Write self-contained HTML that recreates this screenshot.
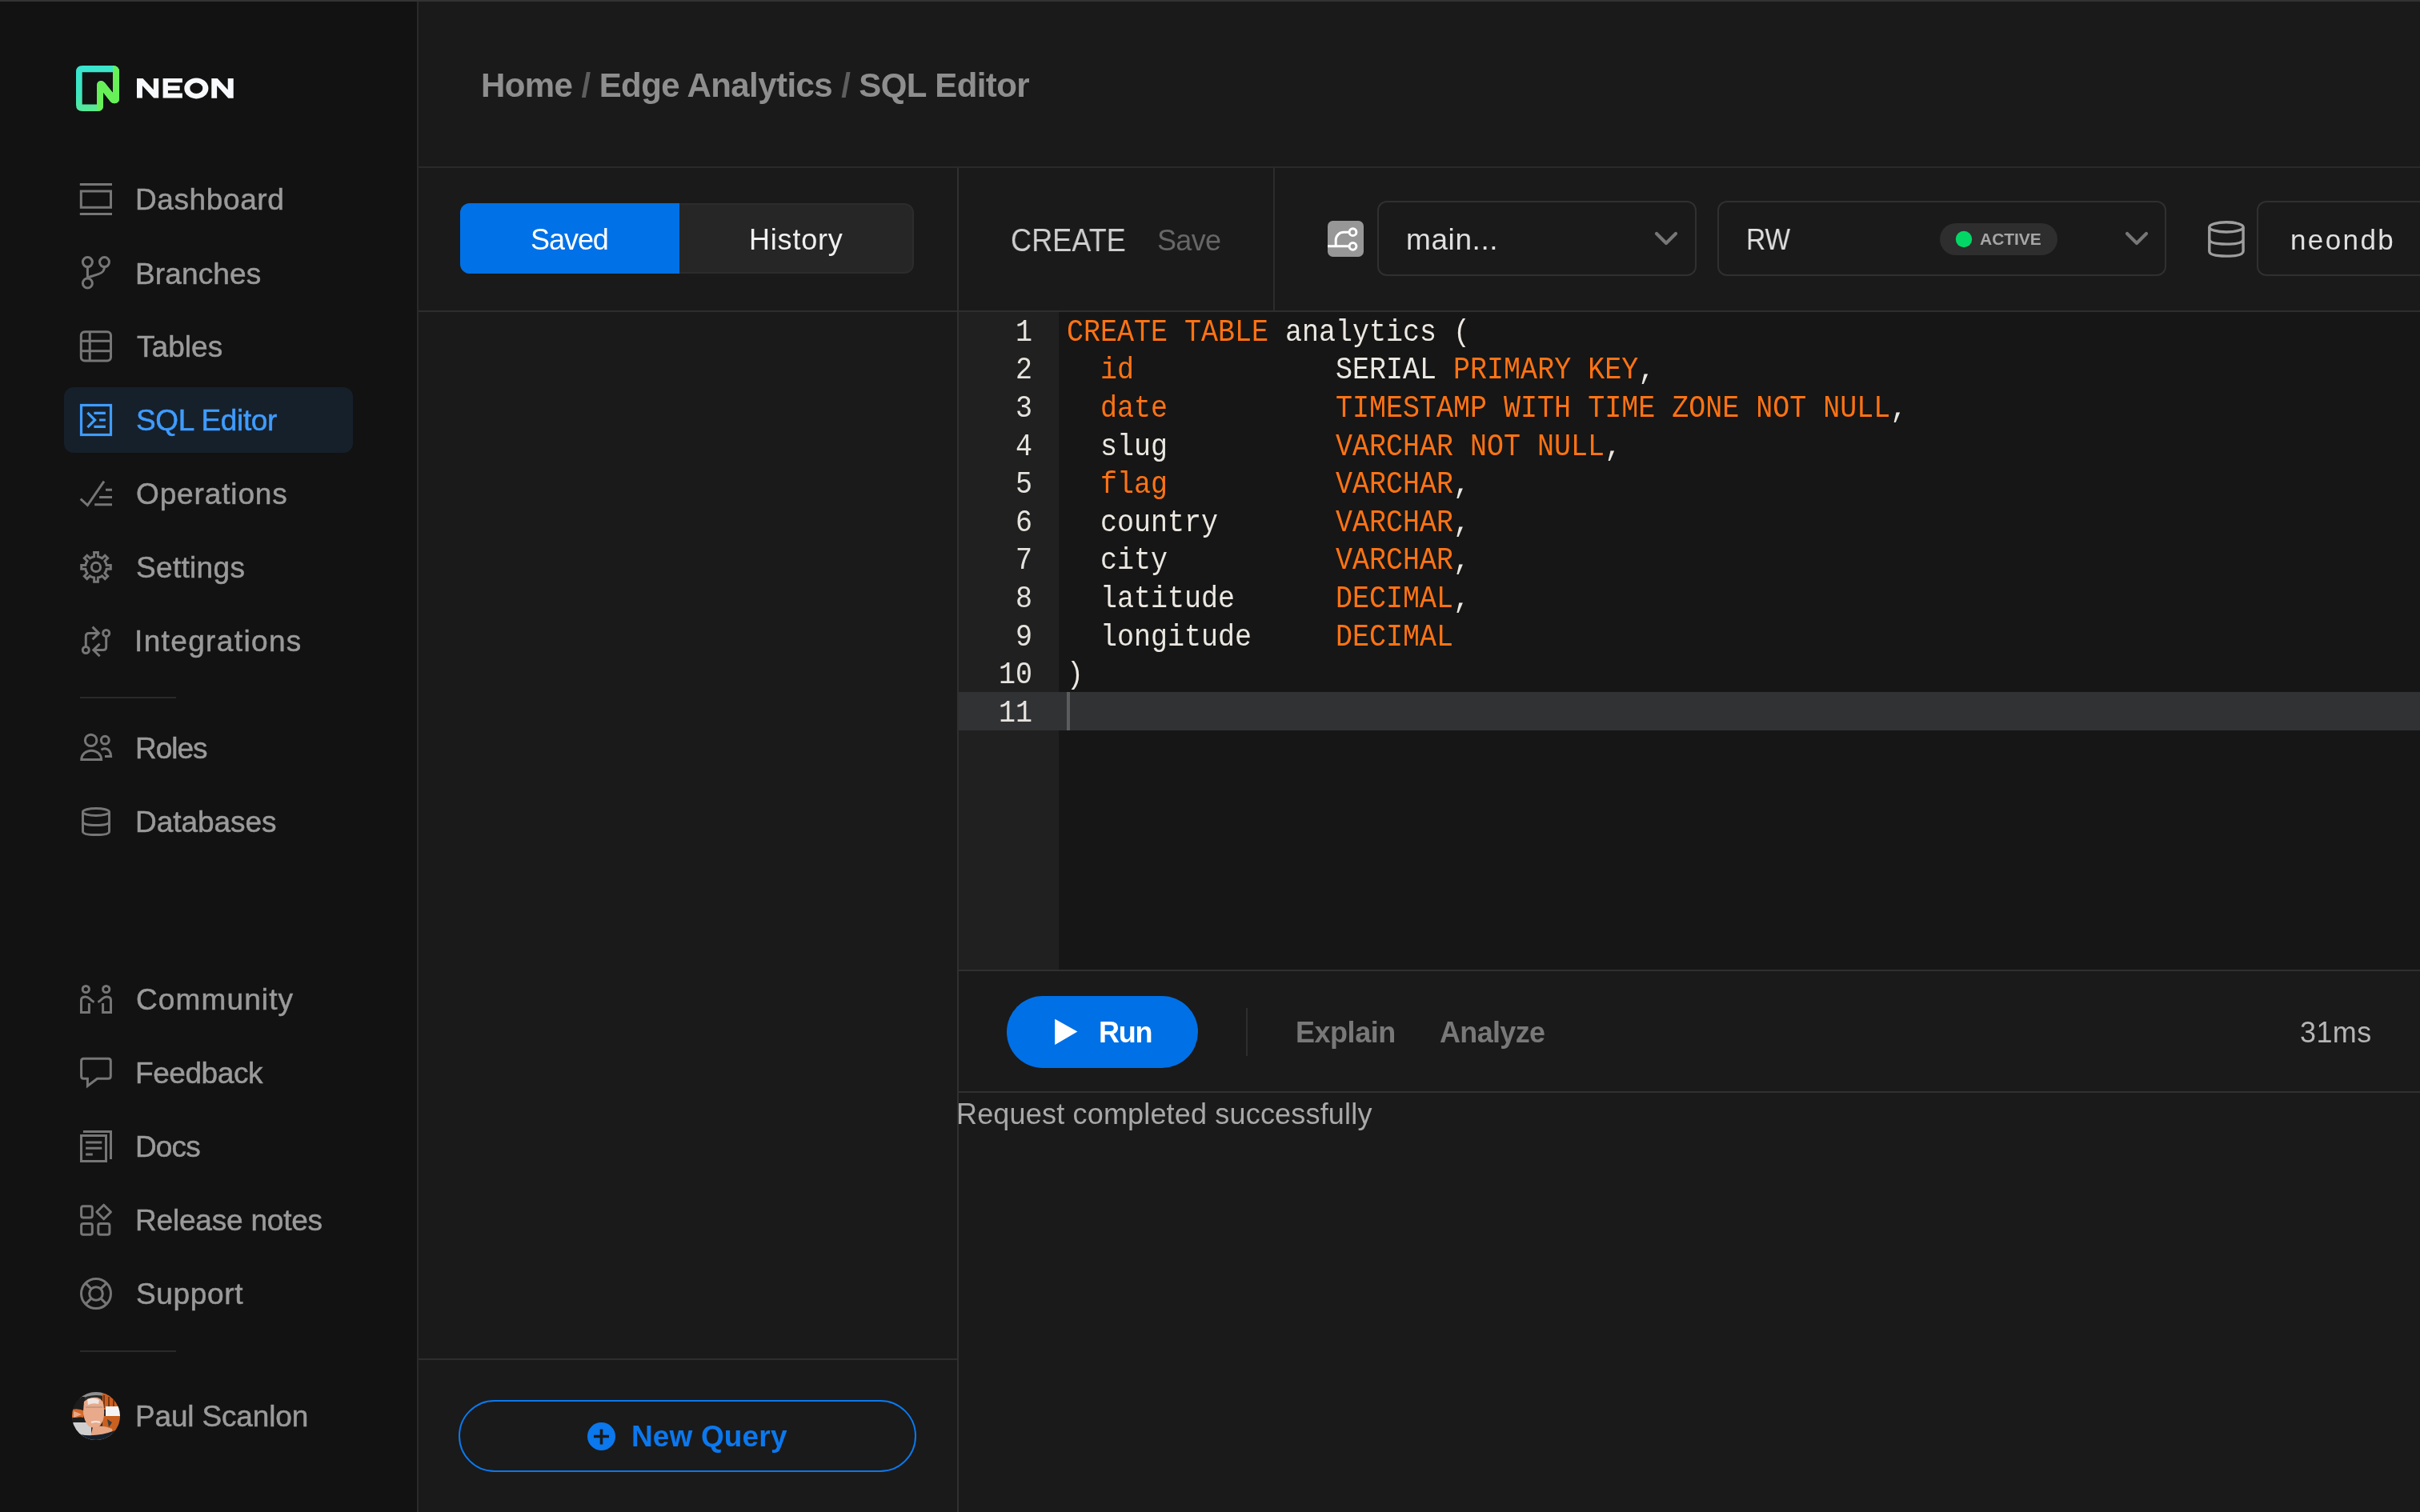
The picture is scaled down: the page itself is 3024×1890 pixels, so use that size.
<!DOCTYPE html><html><head><meta charset="utf-8"><style>
html,body{margin:0;padding:0;width:3024px;height:1890px;overflow:hidden;background:#1a1a1a}
.r,.t{position:absolute}
.t{white-space:pre;will-change:transform}
svg{display:block}
</style></head><body>
<div class="r" style="left:0px;top:0px;width:521px;height:1890px;background:#121212;"></div>
<div class="r" style="left:521px;top:0px;width:2px;height:1890px;background:#2a2a2a;"></div>
<div class="r" style="left:0px;top:0px;width:3024px;height:2px;background:#333333;"></div>
<svg class="r" style="left:90px;top:78px;" width="64" height="64" viewBox="0 0 64 64"><defs><linearGradient id="lg" x1="0" y1="0" x2="0.35" y2="1">
<stop offset="0" stop-color="#37e5d3"/><stop offset="0.55" stop-color="#3fe5c0"/><stop offset="1" stop-color="#5ae890"/></linearGradient></defs>
<path fill="url(#lg)" fill-rule="evenodd" d="M13 4H51Q59 4 59 12V45Q59 51 53 51.3Q50 51.3 48 49L39 37.5V54Q39 61 32 61H13Q5 61 5 53V12Q5 4 13 4ZM12.7 12.3V52.5H31.1V29Q31.1 23 36.5 23Q39 23 41 25.5L51 38V12.3Z"/>
<path fill="#68f058" d="M51 4Q59 4 59 12V45Q59 51 53 51.3Q50 51.3 48 49L39 37.5V54Q39 61 32 61H31.1V29Q31.1 23 36.5 23Q39 23 41 25.5L51 38Z"/></svg>
<svg class="r" style="left:160px;top:90px;" width="140" height="40" viewBox="160 90 140 40"><path fill="#f7f9fc" fill-rule="evenodd" d="M171 122.6V97.9H178.5L191.8 112.2V97.9H198.2V122.6H192.2L177.9 107V122.6Z M203.6 97.9H227.9V103.2H209.9V107.3H224.6V113H209.9V116.6H227.9V122.6H203.6Z M264.3 122.7V98.1H271.7L284.7 112.2V98.1H291.7V122.7H285.3L271.1 107V122.7Z"/><path fill="#f7f9fc" fill-rule="evenodd" d="M230.3 110.45A15.05 12.95 0 1 0 260.4 110.45A15.05 12.95 0 1 0 230.3 110.45ZM237.3 110.2A8 6.8 0 1 1 253.3 110.2A8 6.8 0 1 1 237.3 110.2Z"/></svg>
<div class="r" style="left:80px;top:484px;width:361px;height:82px;background:#16202b;border-radius:12px;"></div>
<svg class="r" style="left:90px;top:219px;" width="60" height="60" viewBox="0 0 60 60"><g fill="none" stroke="#767676" stroke-width="3"><path d="M9.8 11.45H50M9.8 48.45H50"/><rect x="11.3" y="20" width="37.2" height="20.3"/></g></svg>
<div id="nav_dash" class="t" style="left:169.2px;top:226px;font-family:'Liberation Sans', sans-serif;font-size:37px;line-height:48px;font-weight:normal;color:#9a9a9a;letter-spacing:0.6px;-webkit-text-stroke:0.5px #9a9a9a;">Dashboard</div>
<svg class="r" style="left:90px;top:310px;" width="60" height="60" viewBox="0 0 60 60"><g fill="none" stroke="#767676" stroke-width="3"><circle cx="19.4" cy="17.6" r="6"/><circle cx="40.5" cy="17.6" r="6"/><circle cx="19.4" cy="44" r="6"/><path d="M19.4 23.6V38M40.5 23.6C40.5 29 38 31 33 32.6L19.4 37"/></g></svg>
<div id="nav_branch" class="t" style="left:169.2px;top:319px;font-family:'Liberation Sans', sans-serif;font-size:37px;line-height:48px;font-weight:normal;color:#9a9a9a;letter-spacing:0.142px;-webkit-text-stroke:0.5px #9a9a9a;">Branches</div>
<svg class="r" style="left:90px;top:403px;" width="60" height="60" viewBox="0 0 60 60"><g fill="none" stroke="#767676" stroke-width="3"><rect x="11.3" y="11.8" width="37.2" height="36.2" rx="4.5"/><path d="M11.3 23.3H48.5M11.3 35.7H48.5M22.2 11.8V48"/></g></svg>
<div id="nav_tables" class="t" style="left:170.6px;top:410px;font-family:'Liberation Sans', sans-serif;font-size:37px;line-height:48px;font-weight:normal;color:#9a9a9a;letter-spacing:0.04px;-webkit-text-stroke:0.5px #9a9a9a;">Tables</div>
<svg class="r" style="left:90px;top:495px;" width="60" height="60" viewBox="0 0 60 60"><g fill="none" stroke="#3f9cff" stroke-width="3.2"><rect x="11.5" y="11.5" width="37" height="37"/><path d="M19.4 20.8L28.6 30L19.4 39.2M27.4 21.4H41.9M34.1 30H41.9M27.4 38.3H41.9"/></g></svg>
<div id="nav_sql" class="t" style="left:170.0px;top:502px;font-family:'Liberation Sans', sans-serif;font-size:37px;line-height:48px;font-weight:normal;color:#3f9cff;letter-spacing:-0.355px;-webkit-text-stroke:0.5px #3f9cff;">SQL Editor</div>
<svg class="r" style="left:90px;top:590px;" width="60" height="60" viewBox="0 0 60 60"><g fill="none" stroke="#767676" stroke-width="3"><path d="M10.7 33.7L19.4 41.5L40 11.7M42 22.3H50M34.1 31.5H50M28.2 40.7H50"/></g></svg>
<div id="nav_ops" class="t" style="left:170.0px;top:594px;font-family:'Liberation Sans', sans-serif;font-size:37px;line-height:48px;font-weight:normal;color:#9a9a9a;letter-spacing:0.865px;-webkit-text-stroke:0.5px #9a9a9a;">Operations</div>
<svg class="r" style="left:90px;top:680px;" width="60" height="60" viewBox="0 0 60 60"><g fill="none" stroke="#767676" stroke-width="3"><path d="M27.60 15.72L27.60 10.60L32.40 10.60L32.40 15.72A13.40 13.40 0 0 1 37.62 17.88L41.24 14.26L44.64 17.66L41.02 21.28A13.40 13.40 0 0 1 43.18 26.50L48.30 26.50L48.30 31.30L43.18 31.30A13.40 13.40 0 0 1 41.02 36.52L44.64 40.14L41.24 43.54L37.62 39.92A13.40 13.40 0 0 1 32.40 42.08L32.40 47.20L27.60 47.20L27.60 42.08A13.40 13.40 0 0 1 22.38 39.92L18.76 43.54L15.36 40.14L18.98 36.52A13.40 13.40 0 0 1 16.82 31.30L11.70 31.30L11.70 26.50L16.82 26.50A13.40 13.40 0 0 1 18.98 21.28L15.36 17.66L18.76 14.26L22.38 17.88A13.40 13.40 0 0 1 27.60 15.72Z"/><circle cx="30" cy="28.9" r="5.6"/></g></svg>
<div id="nav_settings" class="t" style="left:170.0px;top:686px;font-family:'Liberation Sans', sans-serif;font-size:37px;line-height:48px;font-weight:normal;color:#9a9a9a;letter-spacing:0.314px;-webkit-text-stroke:0.5px #9a9a9a;">Settings</div>
<svg class="r" style="left:90px;top:772px;" width="60" height="60" viewBox="0 0 60 60"><g fill="none" stroke="#767676" stroke-width="3"><circle cx="42.7" cy="19.4" r="4"/><circle cx="17.3" cy="40.5" r="4"/><path d="M17.3 36.5V23.4Q17.3 19.4 21.3 19.4H33.3M25.6 11.6L33.4 19.4L25.6 27.2M42.7 23.4V36.5Q42.7 40.5 38.7 40.5H26.7M34.6 32.7L26.8 40.5L34.6 48.3"/></g></svg>
<div id="nav_integ" class="t" style="left:168.0px;top:778px;font-family:'Liberation Sans', sans-serif;font-size:37px;line-height:48px;font-weight:normal;color:#9a9a9a;letter-spacing:1.364px;-webkit-text-stroke:0.5px #9a9a9a;">Integrations</div>
<svg class="r" style="left:90px;top:905px;" width="60" height="60" viewBox="0 0 60 60"><g fill="none" stroke="#767676" stroke-width="3"><circle cx="23.6" cy="20.4" r="7.2"/><circle cx="41.3" cy="20.2" r="4.9"/><path d="M11.8 44.4A12.4 11.2 0 0 1 36.6 44.4Z"/><path d="M36.5 32.2Q39 30.6 41.5 30.8Q48.2 31.3 48.6 40.5H41"/></g></svg>
<div id="nav_roles" class="t" style="left:169.2px;top:912px;font-family:'Liberation Sans', sans-serif;font-size:37px;line-height:48px;font-weight:normal;color:#9a9a9a;letter-spacing:-1.0px;-webkit-text-stroke:0.5px #9a9a9a;">Roles</div>
<svg class="r" style="left:90px;top:997px;" width="60" height="60" viewBox="0 0 60 60"><g fill="none" stroke="#767676" stroke-width="3"><ellipse cx="30" cy="17.9" rx="16.5" ry="4.5"/><path d="M13.5 17.9V42.2Q13.5 46.6 30 46.6Q46.5 46.6 46.5 42.2V17.9M13.5 30.1Q13.5 34.6 30 34.6Q46.5 34.6 46.5 30.1"/></g></svg>
<div id="nav_db" class="t" style="left:169.2px;top:1004px;font-family:'Liberation Sans', sans-serif;font-size:37px;line-height:48px;font-weight:normal;color:#9a9a9a;letter-spacing:-0.05px;-webkit-text-stroke:0.5px #9a9a9a;">Databases</div>
<svg class="r" style="left:90px;top:1219px;" width="60" height="60" viewBox="0 0 60 60"><g fill="none" stroke="#767676" stroke-width="3"><circle cx="17.3" cy="17.5" r="4.1"/><circle cx="42.7" cy="17.5" r="4.1"/><path d="M21.4 35V46.4H11.5V31Q11.5 27 16.5 26.9Q19.5 26.8 22 29.3Q25 32.5 27.6 33.6"/><path d="M38.6 35V46.4H48.5V31Q48.5 27 43.5 26.9Q40.5 26.8 38 29.3Q35 32.5 32.4 33.6"/></g></svg>
<div id="nav_community" class="t" style="left:170.2px;top:1226px;font-family:'Liberation Sans', sans-serif;font-size:37px;line-height:48px;font-weight:normal;color:#9a9a9a;letter-spacing:1.125px;-webkit-text-stroke:0.5px #9a9a9a;">Community</div>
<svg class="r" style="left:90px;top:1310px;" width="60" height="60" viewBox="0 0 60 60"><g fill="none" stroke="#767676" stroke-width="3" stroke-linejoin="miter"><path d="M14.6 13.2H45.3Q48.3 13.2 48.3 16.2V35.2Q48.3 38.2 45.3 38.2H31.5L19.4 47.5V38.2H14.6Q11.6 38.2 11.6 35.2V16.2Q11.6 13.2 14.6 13.2Z"/></g></svg>
<div id="nav_feedback" class="t" style="left:169.2px;top:1318px;font-family:'Liberation Sans', sans-serif;font-size:37px;line-height:48px;font-weight:normal;color:#9a9a9a;letter-spacing:-0.429px;-webkit-text-stroke:0.5px #9a9a9a;">Feedback</div>
<svg class="r" style="left:90px;top:1403px;" width="60" height="60" viewBox="0 0 60 60"><g fill="none" stroke="#767676" stroke-width="3"><rect x="11.5" y="16.5" width="31" height="32"/><path d="M13.9 11.4H48.5V46.1M17.1 25H37.3M17.1 32.3H37.3M17.1 39.9H25.8"/></g></svg>
<div id="nav_docs" class="t" style="left:169.2px;top:1410px;font-family:'Liberation Sans', sans-serif;font-size:37px;line-height:48px;font-weight:normal;color:#9a9a9a;letter-spacing:-0.865px;-webkit-text-stroke:0.5px #9a9a9a;">Docs</div>
<svg class="r" style="left:90px;top:1495px;" width="60" height="60" viewBox="0 0 60 60"><g fill="none" stroke="#767676" stroke-width="3"><rect x="11.6" y="12.8" width="13.7" height="14.3" rx="2.5"/><rect x="11.6" y="34.6" width="13.7" height="13.7" rx="2.5"/><rect x="32.8" y="34.6" width="14.1" height="13.7" rx="2.5"/><path d="M39.7 11.2L48.5 20L39.7 28.8L30.9 20Z" stroke-linejoin="round"/></g></svg>
<div id="nav_release" class="t" style="left:169.2px;top:1502px;font-family:'Liberation Sans', sans-serif;font-size:37px;line-height:48px;font-weight:normal;color:#9a9a9a;letter-spacing:-0.202px;-webkit-text-stroke:0.5px #9a9a9a;">Release notes</div>
<svg class="r" style="left:90px;top:1587px;" width="60" height="60" viewBox="0 0 60 60"><g fill="none" stroke="#767676" stroke-width="3"><circle cx="30" cy="30" r="18.5"/><circle cx="30" cy="30" r="8.3"/><path d="M35.87 35.87L43.08 43.08M24.13 35.87L16.92 43.08M24.13 24.13L16.92 16.92M35.87 24.13L43.08 16.92"/></g></svg>
<div id="nav_support" class="t" style="left:170.2px;top:1594px;font-family:'Liberation Sans', sans-serif;font-size:37px;line-height:48px;font-weight:normal;color:#9a9a9a;letter-spacing:0.667px;-webkit-text-stroke:0.5px #9a9a9a;">Support</div>
<div class="r" style="left:100px;top:871px;width:120px;height:2px;background:#2a2a2a;"></div>
<div class="r" style="left:100px;top:1688px;width:120px;height:2px;background:#2a2a2a;"></div>
<svg class="r" style="left:90px;top:1740px;" width="60" height="60" viewBox="0 0 60 60"><defs><clipPath id="av"><circle cx="30" cy="30" r="30"/></clipPath></defs>
<g clip-path="url(#av)">
<rect width="60" height="60" fill="#2a2a2a"/>
<path d="M8 0H48V8Q40 4 30 4Q18 4 10 10Z" fill="#8f8f8f"/>
<rect x="0" y="6" width="16" height="16" fill="#1c1c1c"/>
<path d="M0 22Q8 20 16 24L14 32Q8 30 0 34Z" fill="#d56a2a"/>
<path d="M2 24Q8 26 12 28L2 32Z" fill="#e8a98a"/>
<rect x="0" y="32" width="18" height="8" fill="#1e1e1e"/>
<path d="M0 38H24V60H0Z" fill="#cfcfcf"/>
<path d="M38 2H60V22H38Z" fill="#cf5f1e"/>
<path d="M40 4V20M46 6V20M52 8V20" stroke="#5a2a10" stroke-width="1.5"/>
<rect x="42" y="18" width="20" height="12" fill="#f4f4f4"/>
<path d="M38 30H60V52H38Z" fill="#c9601f"/>
<path d="M44 34L50 38L46 44Z" fill="#3a3a3a"/>
<path d="M15 12Q22 6 32 7Q40 9 40 22Q41 36 34 43Q26 47 20 42Q14 34 14 24Z" fill="#e8aa8a"/>
<path d="M19 9Q27 6 34 10L33 15Q26 13 20 16Z" fill="#eee6e2"/>
<path d="M17 19H38" stroke="#9a8a80" stroke-width="1.2"/>
<path d="M24 38Q30 36 35 38" stroke="#f2e8e4" stroke-width="2"/>
<path d="M26 44Q38 40 50 46L52 60H22Z" fill="#e6a684"/>
<path d="M10 53Q30 57 54 48L56 62H8Z" fill="#15202c"/>
</g></svg>
<div id="paul" class="t" style="left:169.0px;top:1747px;font-family:'Liberation Sans', sans-serif;font-size:37px;line-height:48px;font-weight:normal;color:#9a9a9a;letter-spacing:-0.165px;-webkit-text-stroke:0.5px #9a9a9a;">Paul Scanlon</div>
<div id="crumb" class="t" style="left:601.0px;top:79px;font-family:'Liberation Sans', sans-serif;font-size:42px;line-height:55px;font-weight:bold;color:#8e8e8e;letter-spacing:-0.582px;">Home <span style="color:#5e5e5e">/</span> Edge Analytics <span style="color:#5e5e5e">/</span> SQL Editor</div>
<div class="r" style="left:523px;top:208px;width:2501px;height:2px;background:#2a2a2a;"></div>
<div class="r" style="left:523px;top:388px;width:2501px;height:2px;background:#2e2e2e;"></div>
<div class="r" style="left:1196px;top:210px;width:2px;height:1680px;background:#303030;"></div>
<div class="r" style="left:575px;top:254px;width:567px;height:88px;background:#262626;border-radius:12px;box-sizing:border-box;border:2px solid #2c2c2c;"></div>
<div class="r" style="left:575px;top:254px;width:274px;height:88px;background:#0071e6;border-radius:12px 0 0 12px;"></div>
<div id="saved" class="t" style="left:663.4px;top:276px;font-family:'Liberation Sans', sans-serif;font-size:36px;line-height:47px;font-weight:normal;color:#ffffff;letter-spacing:-1.05px;">Saved</div>
<div id="history" class="t" style="left:935.6px;top:276px;font-family:'Liberation Sans', sans-serif;font-size:36px;line-height:47px;font-weight:normal;color:#f0f0f0;letter-spacing:0.801px;">History</div>
<div class="r" style="left:523px;top:1698px;width:673px;height:2px;background:#2e2e2e;"></div>
<div class="r" style="left:573px;top:1750px;width:572px;height:90px;background:transparent;box-sizing:border-box;border:2.5px solid #0b78ee;border-radius:45px;"></div>
<svg class="r" style="left:733px;top:1777px;" width="38" height="38" viewBox="0 0 38 38"><circle cx="18.5" cy="18.5" r="17.5" fill="#0b78ee"/><path d="M18.5 9.5V28.5M9 18.5H28" stroke="#1a1a1a" stroke-width="3.6"/></svg>
<div id="newq" class="t" style="left:789.2px;top:1772px;font-family:'Liberation Sans', sans-serif;font-size:37px;line-height:48px;font-weight:bold;color:#0b78ee;letter-spacing:0.147px;">New Query</div>
<div id="create" class="t" style="left:1262.5px;top:274px;font-family:'Liberation Sans', sans-serif;font-size:40px;line-height:52px;font-weight:normal;color:#cfcfcf;letter-spacing:0px;transform:scaleX(0.9027);transform-origin:0 0;">CREATE</div>
<div id="save" class="t" style="left:1446.0px;top:277px;font-family:'Liberation Sans', sans-serif;font-size:36px;line-height:47px;font-weight:normal;color:#666666;letter-spacing:-0.667px;">Save</div>
<div class="r" style="left:1591px;top:210px;width:2px;height:178px;background:#2c2c2c;"></div>
<svg class="r" style="left:1659px;top:276px;" width="45" height="45" viewBox="0 0 45 45"><rect x="0" y="0" width="45" height="45" rx="6.5" fill="#979797"/><g fill="none" stroke="#fff" stroke-width="3"><path d="M0 31.8H27M10.2 31.8V24A10 10 0 0 1 20.2 14.2H27"/><circle cx="31.5" cy="14.2" r="4.4"/><circle cx="31.5" cy="31.8" r="4.4"/></g></svg>
<div class="r" style="left:1721px;top:251px;width:399px;height:94px;background:transparent;box-sizing:border-box;border:2px solid #303030;border-radius:12px;"></div>
<div id="main" class="t" style="left:1757.4px;top:276px;font-family:'Liberation Sans', sans-serif;font-size:37px;line-height:48px;font-weight:normal;color:#e0e0e0;letter-spacing:0.599px;">main...</div>
<svg class="r" style="left:2067px;top:289px;" width="30" height="19" viewBox="0 0 30 19"><path d="M3 3L15 15L27 3" fill="none" stroke="#777" stroke-width="4.2" stroke-linecap="round" stroke-linejoin="round"/></svg>
<div class="r" style="left:2146px;top:251px;width:561px;height:94px;background:transparent;box-sizing:border-box;border:2px solid #303030;border-radius:12px;"></div>
<div id="rw" class="t" style="left:2181.8px;top:276px;font-family:'Liberation Sans', sans-serif;font-size:37px;line-height:48px;font-weight:normal;color:#e0e0e0;letter-spacing:0px;transform:scaleX(0.9034);transform-origin:0 0;">RW</div>
<div class="r" style="left:2424px;top:279px;width:147px;height:40px;background:#2e2e2e;border-radius:20px;"></div>
<svg class="r" style="left:2443px;top:288px;" width="22" height="22" viewBox="0 0 22 22"><circle cx="11" cy="11" r="10.2" fill="#03d866"/></svg>
<div id="active" class="t" style="left:2474.4px;top:285px;font-family:'Liberation Sans', sans-serif;font-size:21px;line-height:27px;font-weight:bold;color:#a6a6a6;letter-spacing:-0.04px;">ACTIVE</div>
<svg class="r" style="left:2655px;top:289px;" width="30" height="19" viewBox="0 0 30 19"><path d="M3 3L15 15L27 3" fill="none" stroke="#777" stroke-width="4.2" stroke-linecap="round" stroke-linejoin="round"/></svg>
<svg class="r" style="left:2750px;top:268px;" width="64" height="64" viewBox="0 0 64 64"><g fill="none" stroke="#9e9e9e" stroke-width="3.4"><ellipse cx="31.95" cy="15.9" rx="21.15" ry="6.1"/><path d="M10.8 15.9V46Q10.8 52.1 31.95 52.1Q53.1 52.1 53.1 46V15.9M10.8 31Q10.8 37.1 31.95 37.1Q53.1 37.1 53.1 31"/></g></svg>
<div class="r" style="left:2820px;top:251px;width:260px;height:94px;background:transparent;box-sizing:border-box;border:2px solid #303030;border-radius:12px;"></div>
<div id="neondb" class="t" style="left:2862.0px;top:277px;font-family:'Liberation Sans', sans-serif;font-size:35px;line-height:46px;font-weight:normal;color:#e0e0e0;letter-spacing:2.4px;">neondb</div>
<div class="r" style="left:1198px;top:390px;width:1826px;height:822px;background:#161616;"></div>
<div class="r" style="left:1198px;top:390px;width:125px;height:822px;background:#202020;"></div>
<div class="r" style="left:1198px;top:865px;width:1826px;height:48px;background:#313234;"></div>
<div class="r" style="left:1333px;top:865px;width:4px;height:48px;background:#5c5c5c;"></div>
<div id="code0" class="t" style="left:1333px;top:395px;font-family:'Liberation Mono', monospace;font-size:35px;line-height:46px;font-weight:normal;color:#ebe7e1;letter-spacing:0px;transform:scaleY(1.12);transform-origin:0 80%;"><span style="color:#ff7314">CREATE TABLE</span><span style="color:#ebe7e1"> analytics (</span></div>
<div id="ln0" class="t" style="left:1269px;top:395px;font-family:'Liberation Mono', monospace;font-size:35px;line-height:46px;font-weight:normal;color:#e6e3de;letter-spacing:0px;transform:scaleY(1.12);transform-origin:0 80%;">1</div>
<div id="code1" class="t" style="left:1333px;top:442px;font-family:'Liberation Mono', monospace;font-size:35px;line-height:46px;font-weight:normal;color:#ebe7e1;letter-spacing:0px;transform:scaleY(1.12);transform-origin:0 80%;"><span style="color:#ebe7e1">  </span><span style="color:#ff7314">id</span><span style="color:#ebe7e1">            SERIAL </span><span style="color:#ff7314">PRIMARY KEY</span><span style="color:#ebe7e1">,</span></div>
<div id="ln1" class="t" style="left:1269px;top:442px;font-family:'Liberation Mono', monospace;font-size:35px;line-height:46px;font-weight:normal;color:#e6e3de;letter-spacing:0px;transform:scaleY(1.12);transform-origin:0 80%;">2</div>
<div id="code2" class="t" style="left:1333px;top:490px;font-family:'Liberation Mono', monospace;font-size:35px;line-height:46px;font-weight:normal;color:#ebe7e1;letter-spacing:0px;transform:scaleY(1.12);transform-origin:0 80%;"><span style="color:#ebe7e1">  </span><span style="color:#ff7314">date</span><span style="color:#ebe7e1">          </span><span style="color:#ff7314">TIMESTAMP WITH TIME ZONE NOT NULL</span><span style="color:#ebe7e1">,</span></div>
<div id="ln2" class="t" style="left:1269px;top:490px;font-family:'Liberation Mono', monospace;font-size:35px;line-height:46px;font-weight:normal;color:#e6e3de;letter-spacing:0px;transform:scaleY(1.12);transform-origin:0 80%;">3</div>
<div id="code3" class="t" style="left:1333px;top:538px;font-family:'Liberation Mono', monospace;font-size:35px;line-height:46px;font-weight:normal;color:#ebe7e1;letter-spacing:0px;transform:scaleY(1.12);transform-origin:0 80%;"><span style="color:#ebe7e1">  slug          </span><span style="color:#ff7314">VARCHAR NOT NULL</span><span style="color:#ebe7e1">,</span></div>
<div id="ln3" class="t" style="left:1269px;top:538px;font-family:'Liberation Mono', monospace;font-size:35px;line-height:46px;font-weight:normal;color:#e6e3de;letter-spacing:0px;transform:scaleY(1.12);transform-origin:0 80%;">4</div>
<div id="code4" class="t" style="left:1333px;top:585px;font-family:'Liberation Mono', monospace;font-size:35px;line-height:46px;font-weight:normal;color:#ebe7e1;letter-spacing:0px;transform:scaleY(1.12);transform-origin:0 80%;"><span style="color:#ebe7e1">  </span><span style="color:#ff7314">flag</span><span style="color:#ebe7e1">          </span><span style="color:#ff7314">VARCHAR</span><span style="color:#ebe7e1">,</span></div>
<div id="ln4" class="t" style="left:1269px;top:585px;font-family:'Liberation Mono', monospace;font-size:35px;line-height:46px;font-weight:normal;color:#e6e3de;letter-spacing:0px;transform:scaleY(1.12);transform-origin:0 80%;">5</div>
<div id="code5" class="t" style="left:1333px;top:633px;font-family:'Liberation Mono', monospace;font-size:35px;line-height:46px;font-weight:normal;color:#ebe7e1;letter-spacing:0px;transform:scaleY(1.12);transform-origin:0 80%;"><span style="color:#ebe7e1">  country       </span><span style="color:#ff7314">VARCHAR</span><span style="color:#ebe7e1">,</span></div>
<div id="ln5" class="t" style="left:1269px;top:633px;font-family:'Liberation Mono', monospace;font-size:35px;line-height:46px;font-weight:normal;color:#e6e3de;letter-spacing:0px;transform:scaleY(1.12);transform-origin:0 80%;">6</div>
<div id="code6" class="t" style="left:1333px;top:680px;font-family:'Liberation Mono', monospace;font-size:35px;line-height:46px;font-weight:normal;color:#ebe7e1;letter-spacing:0px;transform:scaleY(1.12);transform-origin:0 80%;"><span style="color:#ebe7e1">  city          </span><span style="color:#ff7314">VARCHAR</span><span style="color:#ebe7e1">,</span></div>
<div id="ln6" class="t" style="left:1269px;top:680px;font-family:'Liberation Mono', monospace;font-size:35px;line-height:46px;font-weight:normal;color:#e6e3de;letter-spacing:0px;transform:scaleY(1.12);transform-origin:0 80%;">7</div>
<div id="code7" class="t" style="left:1333px;top:728px;font-family:'Liberation Mono', monospace;font-size:35px;line-height:46px;font-weight:normal;color:#ebe7e1;letter-spacing:0px;transform:scaleY(1.12);transform-origin:0 80%;"><span style="color:#ebe7e1">  latitude      </span><span style="color:#ff7314">DECIMAL</span><span style="color:#ebe7e1">,</span></div>
<div id="ln7" class="t" style="left:1269px;top:728px;font-family:'Liberation Mono', monospace;font-size:35px;line-height:46px;font-weight:normal;color:#e6e3de;letter-spacing:0px;transform:scaleY(1.12);transform-origin:0 80%;">8</div>
<div id="code8" class="t" style="left:1333px;top:776px;font-family:'Liberation Mono', monospace;font-size:35px;line-height:46px;font-weight:normal;color:#ebe7e1;letter-spacing:0px;transform:scaleY(1.12);transform-origin:0 80%;"><span style="color:#ebe7e1">  longitude     </span><span style="color:#ff7314">DECIMAL</span></div>
<div id="ln8" class="t" style="left:1269px;top:776px;font-family:'Liberation Mono', monospace;font-size:35px;line-height:46px;font-weight:normal;color:#e6e3de;letter-spacing:0px;transform:scaleY(1.12);transform-origin:0 80%;">9</div>
<div id="code9" class="t" style="left:1333px;top:823px;font-family:'Liberation Mono', monospace;font-size:35px;line-height:46px;font-weight:normal;color:#ebe7e1;letter-spacing:0px;transform:scaleY(1.12);transform-origin:0 80%;"><span style="color:#ebe7e1">)</span></div>
<div id="ln9" class="t" style="left:1248px;top:823px;font-family:'Liberation Mono', monospace;font-size:35px;line-height:46px;font-weight:normal;color:#e6e3de;letter-spacing:0px;transform:scaleY(1.12);transform-origin:0 80%;">10</div>
<div id="code10" class="t" style="left:1333px;top:871px;font-family:'Liberation Mono', monospace;font-size:35px;line-height:46px;font-weight:normal;color:#ebe7e1;letter-spacing:0px;transform:scaleY(1.12);transform-origin:0 80%;"><span style="color:#ebe7e1"></span></div>
<div id="ln10" class="t" style="left:1248px;top:871px;font-family:'Liberation Mono', monospace;font-size:35px;line-height:46px;font-weight:normal;color:#e6e3de;letter-spacing:0px;transform:scaleY(1.12);transform-origin:0 80%;">11</div>
<div class="r" style="left:1198px;top:1212px;width:1826px;height:2px;background:#303030;"></div>
<div class="r" style="left:1258px;top:1245px;width:239px;height:90px;background:#0070e6;border-radius:45px;"></div>
<svg class="r" style="left:1318px;top:1273px;" width="30" height="34" viewBox="0 0 30 34"><path d="M0.2 0.8V33L28.4 16.6Z" fill="#fff"/></svg>
<div id="run" class="t" style="left:1373.0px;top:1267px;font-family:'Liberation Sans', sans-serif;font-size:36px;line-height:47px;font-weight:bold;color:#ffffff;letter-spacing:-1.2px;">Run</div>
<div class="r" style="left:1557px;top:1260px;width:2px;height:60px;background:#2e2e2e;"></div>
<div id="explain" class="t" style="left:1619.0px;top:1267px;font-family:'Liberation Sans', sans-serif;font-size:36px;line-height:47px;font-weight:bold;color:#787878;letter-spacing:-0.467px;">Explain</div>
<div id="analyze" class="t" style="left:1799.0px;top:1267px;font-family:'Liberation Sans', sans-serif;font-size:36px;line-height:47px;font-weight:bold;color:#787878;letter-spacing:-0.667px;">Analyze</div>
<div id="ms" class="t" style="left:2874.2px;top:1267px;font-family:'Liberation Sans', sans-serif;font-size:36px;line-height:47px;font-weight:normal;color:#b5b5b5;letter-spacing:0.399px;">31ms</div>
<div class="r" style="left:1198px;top:1364px;width:1826px;height:2px;background:#303030;"></div>
<div id="req" class="t" style="left:1195.0px;top:1369px;font-family:'Liberation Sans', sans-serif;font-size:36px;line-height:47px;font-weight:normal;color:#a8a8a8;letter-spacing:0.177px;">Request completed successfully</div>
<script>(function(){var w=window.innerWidth;if(w&&w!==3024&&w>600){document.documentElement.style.zoom=w/3024;}})();</script>
</body></html>
